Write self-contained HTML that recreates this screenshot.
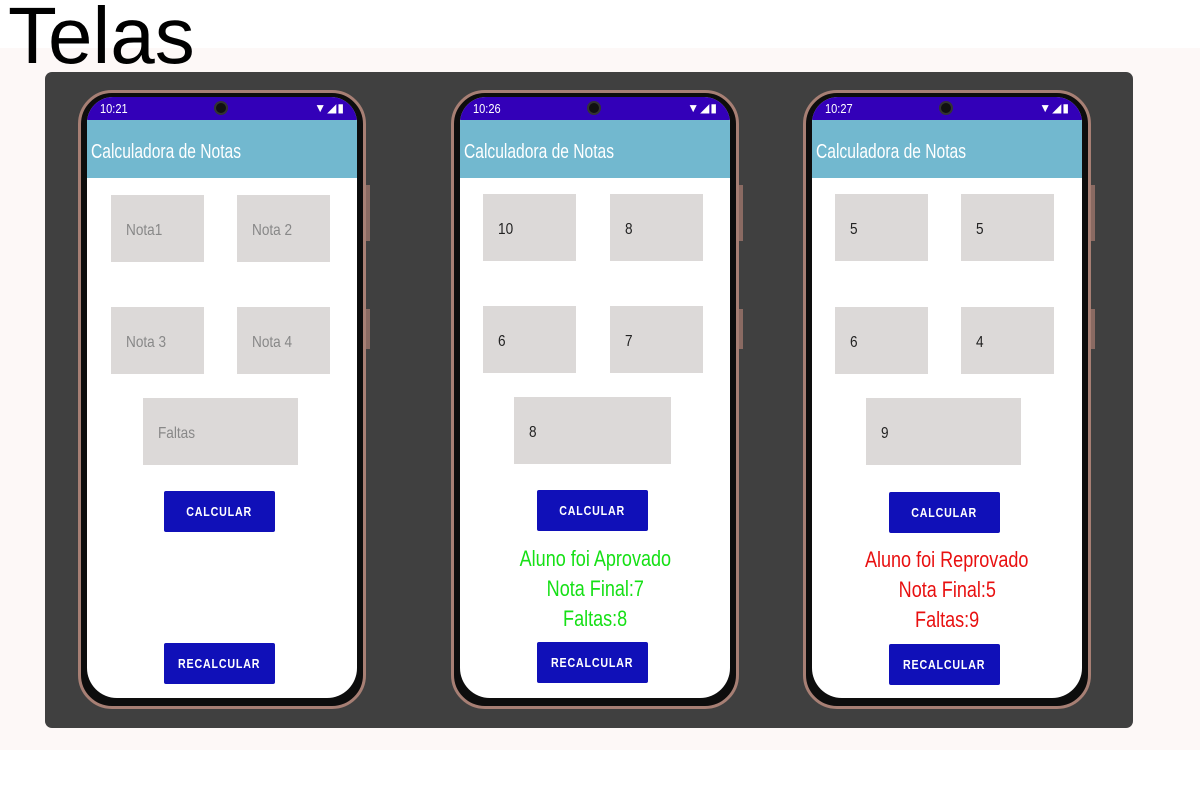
<!DOCTYPE html>
<html><head><meta charset="utf-8"><style>
*{margin:0;padding:0;box-sizing:border-box}
body{width:1200px;height:800px;background:#fff;position:relative;overflow:hidden;font-family:"Liberation Sans",sans-serif}
.title{position:absolute;left:8px;top:-8px;font-size:80px;color:#000;z-index:5;line-height:1.1}
.band{position:absolute;left:0;top:48px;width:1200px;height:702px;background:#fdf8f7}
.panel{position:absolute;left:45px;top:72px;width:1088px;height:656px;background:#404040;border-radius:7px}
.phone{position:absolute;top:90px;width:288px;height:619px;border-radius:34px;border:3px solid #a77f74;background:#0d0d0d}
.screen{position:absolute;left:6px;top:4px;width:270px;height:601px;border-radius:26px 26px 30px 30px;background:#fff;overflow:hidden}
.sb{position:absolute;left:0;top:0;width:270px;height:23px;background:#3300b8;color:#fff;font-size:13px}
.sb .t{position:absolute;left:13px;top:4px;transform:scaleX(.85);transform-origin:left}
.cam{position:absolute;left:127px;top:4px;width:14px;height:14px;border-radius:50%;background:#111;border:2px solid #333}
.ic{position:absolute;right:12px;top:4px;font-size:12px;letter-spacing:1px}
.hd{position:absolute;left:0;top:23px;width:270px;height:58px;background:#72b8cf;color:#fff;font-size:20px;padding:21px 0 0 4px}
.hd span{display:inline-block;transform:scaleX(.78);transform-origin:left}
.box{position:absolute;width:93px;height:67px;background:#dcd9d8;font-size:16px;padding-top:27px;padding-left:15px;color:#222}
.box span{display:inline-block;transform:scaleX(.85);transform-origin:left}
.ph{color:#888}
.btn{position:absolute;left:77px;width:111px;height:41px;background:#1010b8;color:#fff;font-size:13px;font-weight:bold;letter-spacing:1px;text-align:center;line-height:41px;border-radius:2px}
.btn span{display:inline-block;transform:scaleX(.82)}
.res{position:absolute;left:0;width:270px;text-align:center;font-size:22px;line-height:30px}
.res span{display:inline-block;transform:scaleX(.82)}
.side{position:absolute;right:-7px;width:4px;background:#8a6a62}
</style></head><body>
<div class="title">Telas</div>
<div class="band"></div>
<div class="panel"></div>

<div class="phone" style="left:78px">
 <div class="side" style="top:92px;height:56px"></div><div class="side" style="top:216px;height:40px"></div>
 <div class="screen">
  <div class="sb"><span class="t">10:21</span><div class="cam"></div><span class="ic">▼◢▮</span></div>
  <div class="hd"><span>Calculadora de Notas</span></div>
  <div class="box ph" style="left:24px;top:98px"><span>Nota1</span></div>
  <div class="box ph" style="left:150px;top:98px"><span>Nota 2</span></div>
  <div class="box ph" style="left:24px;top:210px"><span>Nota 3</span></div>
  <div class="box ph" style="left:150px;top:210px"><span>Nota 4</span></div>
  <div class="box ph" style="left:56px;top:301px;width:155px"><span>Faltas</span></div>
  <div class="btn" style="top:394px"><span>CALCULAR</span></div>
  <div class="btn" style="top:546px"><span>RECALCULAR</span></div>
 </div>
</div>

<div class="phone" style="left:451px">
 <div class="side" style="top:92px;height:56px"></div><div class="side" style="top:216px;height:40px"></div>
 <div class="screen">
  <div class="sb"><span class="t">10:26</span><div class="cam"></div><span class="ic">▼◢▮</span></div>
  <div class="hd"><span>Calculadora de Notas</span></div>
  <div class="box" style="left:23px;top:97px"><span>10</span></div>
  <div class="box" style="left:150px;top:97px"><span>8</span></div>
  <div class="box" style="left:23px;top:209px"><span>6</span></div>
  <div class="box" style="left:150px;top:209px"><span>7</span></div>
  <div class="box" style="left:54px;top:300px;width:157px"><span>8</span></div>
  <div class="btn" style="top:393px"><span>CALCULAR</span></div>
  <div class="res" style="top:447px;color:#16e016"><span>Aluno foi Aprovado</span><br><span>Nota Final:7</span><br><span>Faltas:8</span></div>
  <div class="btn" style="top:545px"><span>RECALCULAR</span></div>
 </div>
</div>

<div class="phone" style="left:803px">
 <div class="side" style="top:92px;height:56px"></div><div class="side" style="top:216px;height:40px"></div>
 <div class="screen">
  <div class="sb"><span class="t">10:27</span><div class="cam"></div><span class="ic">▼◢▮</span></div>
  <div class="hd"><span>Calculadora de Notas</span></div>
  <div class="box" style="left:23px;top:97px"><span>5</span></div>
  <div class="box" style="left:149px;top:97px"><span>5</span></div>
  <div class="box" style="left:23px;top:210px"><span>6</span></div>
  <div class="box" style="left:149px;top:210px"><span>4</span></div>
  <div class="box" style="left:54px;top:301px;width:155px"><span>9</span></div>
  <div class="btn" style="top:395px"><span>CALCULAR</span></div>
  <div class="res" style="top:448px;color:#e81010"><span>Aluno foi Reprovado</span><br><span>Nota Final:5</span><br><span>Faltas:9</span></div>
  <div class="btn" style="top:547px"><span>RECALCULAR</span></div>
 </div>
</div>
</body></html>
